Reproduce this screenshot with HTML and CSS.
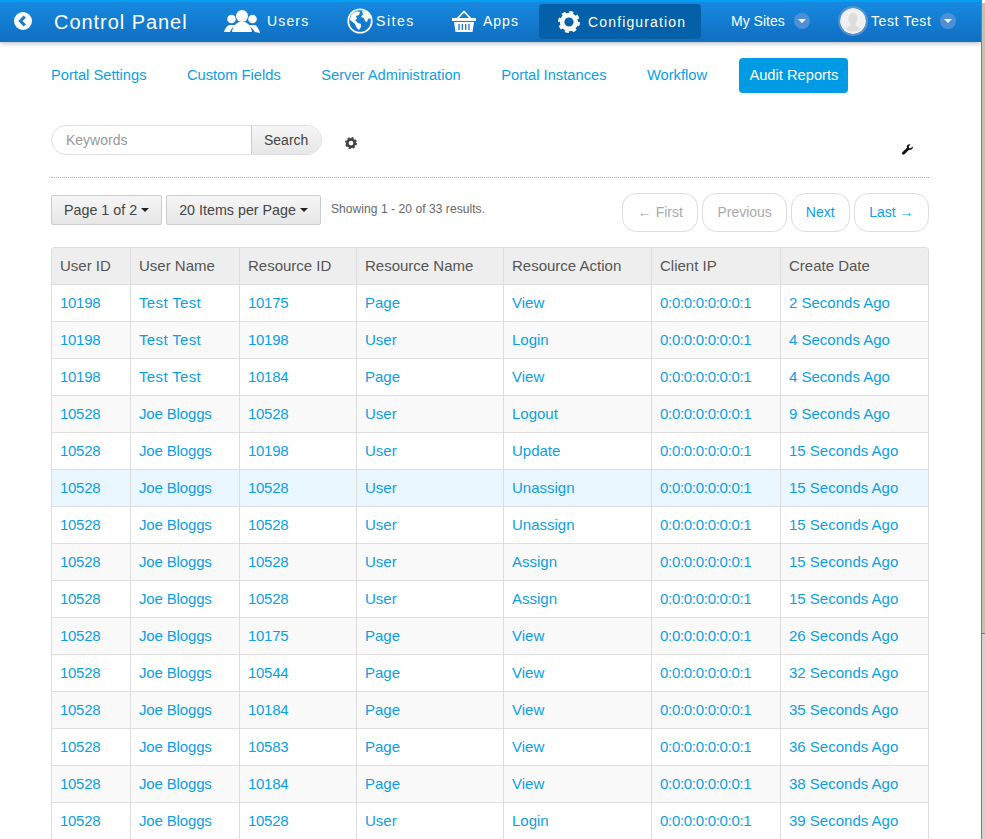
FILE: index.html
```html
<!DOCTYPE html>
<html lang="en">
<head>
<meta charset="utf-8">
<title>Audit Reports</title>
<link rel="stylesheet" href="styles.css">
</head>
<body>
<div class="window">
<header class="dockbar">
  <a class="back" href="#"><svg viewBox="0 0 18 18" width="18" height="18"><circle cx="9" cy="9" r="9" fill="#fff"/><path d="M10.800 4.600 6.400 9l4.400 4.400" fill="none" stroke="#1479cf" stroke-width="3"/></svg></a>
  <span class="brand">Control Panel</span>
  <a class="nav users" href="#"><svg viewBox="0 0 36 24" width="36" height="24"><g fill="#fff"><circle cx="18" cy="7" r="6"/><path d="M8 23c1-7 5-9 7-10h6c2 1 6 3 7 10z"/><circle cx="7.500" cy="10" r="4.300"/><path d="M0 23c1-4 3-6 5-7h5l1 1c-2 1-4 3-5 6z"/><circle cx="28.500" cy="10" r="4.300"/><path d="M36 24c-1-4-3-7-5-8h-5l-1 1c2 1 4 3 6 6z"/></g></svg><span>Users</span></a>
  <a class="nav sites" href="#"><svg viewBox="0 0 26 26" width="26" height="26"><circle cx="13" cy="13" r="11.700" fill="none" stroke="#fff" stroke-width="1.800"/><path fill="#fff" d="M6 5c2-1.500 5-2 7-1l-1 3-3 1 1 3-2 1 3 3 3 1v3l-2 3c-3-2-3-5-5-7L3 12c0-3 1-5 3-7zM15 3c3 0 6 1 8 4l1 3-3 1-1 3-2-1-1-3-3-1 2-3z"/></svg><span>Sites</span></a>
  <a class="nav apps" href="#"><svg viewBox="0 0 24 24" width="24" height="24"><path d="M5 10 12 2.500 19 10" fill="none" stroke="#fff" stroke-width="1.800"/><path fill="#fff" d="M0 9h24v3H0zM2 13h20l-1.500 10h-17z"/><path d="M7 15v6M10.300 15v6M13.700 15v6M17 15v6" stroke="#1479cf" stroke-width="1.300"/></svg><span>Apps</span></a>
  <a class="nav active" href="#"><svg viewBox="0 0 24 24" width="22" height="22"><circle cx="12" cy="12" r="7.500" fill="none" stroke="#fff" stroke-width="5"/><circle cx="12" cy="12" r="10.500" fill="none" stroke="#fff" stroke-width="3" stroke-dasharray="4.300 3.947"/></svg><span>Configuration</span></a>
  <a class="mysites" href="#"><span>My Sites</span><i class="caret-badge"></i></a>
  <a class="profile" href="#"><span class="avatar"><svg viewBox="0 0 26 26" width="26" height="26"><circle cx="13" cy="13" r="13" fill="#f0f0f0"/><path fill="#dcdcdc" d="M13 5c3 0 4.500 2.500 4.500 5.500 0 2-1 4-2 5v2l5.500 3a12 12 0 0 1-16 0l5.500-3v-2c-1-1-2-3-2-5C8.500 7.500 10 5 13 5z"/></svg></span><span>Test Test</span><i class="caret-badge"></i></a>
</header>
<main class="content">
  <nav class="tabs">
    <a href="#">Portal Settings</a><a href="#">Custom Fields</a><a href="#">Server Administration</a><a href="#">Portal Instances</a><a href="#">Workflow</a><a class="current" href="#">Audit Reports</a>
  </nav>
  <div class="searchbar">
    <div class="search"><span class="keywords">Keywords</span><span class="search-btn">Search</span></div>
    <svg class="gear" viewBox="0 0 24 24" width="12" height="12"><circle cx="12" cy="12" r="7.500" fill="none" stroke="#444" stroke-width="5.500"/><circle cx="12" cy="12" r="10.500" fill="none" stroke="#444" stroke-width="3" stroke-dasharray="4.300 3.947"/></svg>
    <svg class="wrench" viewBox="0 0 12 12" width="11" height="11"><path fill="#111" d="M11.700 2.600 9.500 4.600 7.700 4.300 7.400 2.500 9.400.4C7.700-.300 5.700.6 5.300 2.300c-.1.600-.1 1.200.1 1.700L.4 9c-.6.600-.6 1.600 0 2.300.7.600 1.700.6 2.300 0l5-5c1.800.6 3.700-.4 4.100-2.100.1-.6.100-1.100-.1-1.600z"/></svg>
  </div>
  <div class="pagerbar">
    <span class="dropdown">Page 1 of 2<i class="caret"></i></span>
    <span class="dropdown">20 Items per Page<i class="caret"></i></span>
    <span class="results">Showing 1 - 20 of 33 results.</span>
    <div class="pager">
      <a class="off edge" href="#">← First</a><a class="off" href="#">Previous</a><a href="#">Next</a><a class="edge" href="#">Last →</a>
    </div>
  </div>
  <div class="table-wrap">
  <table>
    <colgroup><col class="c1"><col class="c2"><col class="c3"><col class="c4"><col class="c5"><col class="c6"><col class="c7"></colgroup>
    <thead><tr><th>User ID</th><th>User Name</th><th>Resource ID</th><th>Resource Name</th><th>Resource Action</th><th>Client IP</th><th>Create Date</th></tr></thead>
    <tbody>
      <tr><td><a href="#">10198</a></td><td class="tt"><a href="#">Test Test</a></td><td><a href="#">10175</a></td><td><a href="#">Page</a></td><td><a href="#">View</a></td><td><a href="#">0:0:0:0:0:0:0:1</a></td><td><a href="#">2 Seconds Ago</a></td></tr>
      <tr><td><a href="#">10198</a></td><td class="tt"><a href="#">Test Test</a></td><td><a href="#">10198</a></td><td><a href="#">User</a></td><td><a href="#">Login</a></td><td><a href="#">0:0:0:0:0:0:0:1</a></td><td><a href="#">4 Seconds Ago</a></td></tr>
      <tr><td><a href="#">10198</a></td><td class="tt"><a href="#">Test Test</a></td><td><a href="#">10184</a></td><td><a href="#">Page</a></td><td><a href="#">View</a></td><td><a href="#">0:0:0:0:0:0:0:1</a></td><td><a href="#">4 Seconds Ago</a></td></tr>
      <tr><td><a href="#">10528</a></td><td><a href="#">Joe Bloggs</a></td><td><a href="#">10528</a></td><td><a href="#">User</a></td><td><a href="#">Logout</a></td><td><a href="#">0:0:0:0:0:0:0:1</a></td><td><a href="#">9 Seconds Ago</a></td></tr>
      <tr><td><a href="#">10528</a></td><td><a href="#">Joe Bloggs</a></td><td><a href="#">10198</a></td><td><a href="#">User</a></td><td><a href="#">Update</a></td><td><a href="#">0:0:0:0:0:0:0:1</a></td><td><a href="#">15 Seconds Ago</a></td></tr>
      <tr class="hover"><td><a href="#">10528</a></td><td><a href="#">Joe Bloggs</a></td><td><a href="#">10528</a></td><td><a href="#">User</a></td><td><a href="#">Unassign</a></td><td><a href="#">0:0:0:0:0:0:0:1</a></td><td><a href="#">15 Seconds Ago</a></td></tr>
      <tr><td><a href="#">10528</a></td><td><a href="#">Joe Bloggs</a></td><td><a href="#">10528</a></td><td><a href="#">User</a></td><td><a href="#">Unassign</a></td><td><a href="#">0:0:0:0:0:0:0:1</a></td><td><a href="#">15 Seconds Ago</a></td></tr>
      <tr><td><a href="#">10528</a></td><td><a href="#">Joe Bloggs</a></td><td><a href="#">10528</a></td><td><a href="#">User</a></td><td><a href="#">Assign</a></td><td><a href="#">0:0:0:0:0:0:0:1</a></td><td><a href="#">15 Seconds Ago</a></td></tr>
      <tr><td><a href="#">10528</a></td><td><a href="#">Joe Bloggs</a></td><td><a href="#">10528</a></td><td><a href="#">User</a></td><td><a href="#">Assign</a></td><td><a href="#">0:0:0:0:0:0:0:1</a></td><td><a href="#">15 Seconds Ago</a></td></tr>
      <tr><td><a href="#">10528</a></td><td><a href="#">Joe Bloggs</a></td><td><a href="#">10175</a></td><td><a href="#">Page</a></td><td><a href="#">View</a></td><td><a href="#">0:0:0:0:0:0:0:1</a></td><td><a href="#">26 Seconds Ago</a></td></tr>
      <tr><td><a href="#">10528</a></td><td><a href="#">Joe Bloggs</a></td><td><a href="#">10544</a></td><td><a href="#">Page</a></td><td><a href="#">View</a></td><td><a href="#">0:0:0:0:0:0:0:1</a></td><td><a href="#">32 Seconds Ago</a></td></tr>
      <tr><td><a href="#">10528</a></td><td><a href="#">Joe Bloggs</a></td><td><a href="#">10184</a></td><td><a href="#">Page</a></td><td><a href="#">View</a></td><td><a href="#">0:0:0:0:0:0:0:1</a></td><td><a href="#">35 Seconds Ago</a></td></tr>
      <tr><td><a href="#">10528</a></td><td><a href="#">Joe Bloggs</a></td><td><a href="#">10583</a></td><td><a href="#">Page</a></td><td><a href="#">View</a></td><td><a href="#">0:0:0:0:0:0:0:1</a></td><td><a href="#">36 Seconds Ago</a></td></tr>
      <tr><td><a href="#">10528</a></td><td><a href="#">Joe Bloggs</a></td><td><a href="#">10184</a></td><td><a href="#">Page</a></td><td><a href="#">View</a></td><td><a href="#">0:0:0:0:0:0:0:1</a></td><td><a href="#">38 Seconds Ago</a></td></tr>
      <tr><td><a href="#">10528</a></td><td><a href="#">Joe Bloggs</a></td><td><a href="#">10528</a></td><td><a href="#">User</a></td><td><a href="#">Login</a></td><td><a href="#">0:0:0:0:0:0:0:1</a></td><td><a href="#">39 Seconds Ago</a></td></tr>
    </tbody>
  </table>
  </div>
</main>
</div>
</body>
</html>
```
FILE: styles.css
```css
* { box-sizing: border-box; }
html, body { margin: 0; height: 839px; overflow: hidden; }
body { background: linear-gradient(#fff 0, #fff 3px, #c2c2b0 3px, #c2c2b0 633px, #77776f 633px, #77776f 634px, #d2d2cc 634px); font-family: "Liberation Sans", Arial, sans-serif; color: #555; }
a { text-decoration: none; color: #0b9fe6; }
.window { width: 982px; height: 839px; background: #fff; border-right: 1px solid #7c7c78; overflow: hidden; }
.dockbar { height: 42px; display: flex; align-items: center; color: #fff; background: linear-gradient(#1689e0, #106fc0); border-top: 2px solid #00a0f0; padding-bottom: 2px; box-shadow: 0 1px 5px rgba(0,0,0,.3); position: relative; }
.dockbar a { color: #fff; display: flex; align-items: center; }
.back { margin-left: 14px; }
.brand { font-size: 20px; letter-spacing: .95px; margin: 2px 0 0 22px; width: 170px; }
.nav { font-size: 14px; letter-spacing: 1.15px; height: 35px; }
.users { gap: 7px; width: 123px; }
.sites { gap: 3px; width: 105px; letter-spacing: 1.55px; }
.apps { gap: 7px; width: 87px; letter-spacing: 1px; }
.nav.active { background: #0460a9; width: 162px; border-radius: 4px; padding-left: 19px; gap: 8px; margin-top: 1px; }
.mysites { font-size: 14px; margin-left: 30px; width: 107px; }
.profile { font-size: 14px; letter-spacing: .6px; }
.avatar { width: 30px; height: 30px; border-radius: 50%; border: 2px solid #5790d6; display: flex; overflow: hidden; flex: none; margin-right: 3px; }
.caret-badge { width: 16px; height: 16px; border-radius: 50%; background: #4d90d8; position: relative; margin-left: 9px; flex: none; }
.caret-badge::after { content: ""; position: absolute; left: 4px; top: 6px; border: 4px solid transparent; border-top: 4px solid #fff; border-bottom: 0; }
.content { padding: 16px 52px 0 51px; }
.tabs { display: flex; align-items: flex-start; height: 35px; gap: 40.4px; font-size: 14.7px; }
.tabs a { padding: 9px 0 7px; height: 35px; }
.tabs .current { background: #009ae5; color: #fff; border-radius: 4px; padding: 9px 10px 7px; margin-left: -8px; }
.searchbar { display: flex; align-items: flex-start; height: 53px; margin-top: 32px; border-bottom: 1px dotted #aaa; position: relative; }
.search { display: flex; width: 271px; height: 30px; border: 1px solid #ddd; border-radius: 16px; overflow: hidden; font-size: 14px; }
.keywords { flex: 1; color: #999; padding: 6px 14px; }
.search-btn { width: 70px; background: linear-gradient(#f6f6f6, #e6e6e6); border-left: 1px solid #ccc; color: #444; padding: 6px 12px; }
.gear { margin: 12px 0 0 23px; }
.wrench { position: absolute; right: 16px; top: 19px; }
.pagerbar { display: flex; align-items: flex-start; margin-top: 17px; height: 52px; }
.dropdown { height: 30px; border: 1px solid #ccc; border-radius: 2px; background: linear-gradient(#f6f6f6, #e6e6e6); color: #444; font-size: 14.3px; padding: 6px 12px; margin-right: 4px; display: flex; align-items: center; }
.caret { border: 4px solid transparent; border-top-color: #222; border-bottom: 0; margin-left: 4px; }
.results { font-size: 12px; letter-spacing: .07px; margin: 7px 0 0 6px; color: #666; }
.pager { margin-left: auto; display: flex; gap: 4px; margin-top: -2px; }
.pager a { height: 39px; border: 1px solid #ddd; border-radius: 14px; font-size: 14px; padding: 10px 14px; }
.pager .edge { padding: 10px 14.5px; }
.pager .off { color: #aaa; }
.table-wrap { border: 1px solid #ddd; border-bottom: 0; border-radius: 4px 4px 0 0; overflow: hidden; }
table { width: 877px; table-layout: fixed; border-collapse: collapse; font-size: 15px; }
th, td { height: 37px; padding: 0 8px 0 8.5px; text-align: left; border-left: 1px solid #ddd; border-bottom: 1px solid #ddd; white-space: nowrap; }
th:first-child, td:first-child { border-left: 0; padding-left: 8px; }
th { background: #eee; font-weight: 400; color: #555; height: 36px; padding-bottom: 1px; }
td:nth-child(1), td:nth-child(3), td:nth-child(6) { letter-spacing: -.3px; }
td:nth-child(2) { letter-spacing: -.15px; }
td.tt { letter-spacing: .35px; }
tbody tr:nth-child(even) { background: #f9f9f9; }
tbody tr.hover { background: #eaf6fd; }
.c1 { width: 78px; } .c2 { width: 109px; } .c3 { width: 117px; } .c4 { width: 147px; } .c5 { width: 148px; } .c6 { width: 129px; } .c7 { width: 149px; }
```
